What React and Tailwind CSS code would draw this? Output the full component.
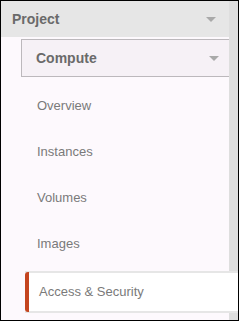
import React from 'react'

const ITEMS = ['Overview', 'Instances', 'Volumes', 'Images']

function Caret() {
  return (
    <svg width="10" height="5" viewBox="0 0 10 5" className="shrink-0">
      <path d="M0 0 L10 0 L5 5 Z" fill="#a9a9a9" />
    </svg>
  )
}

export default function App() {
  return (
    <div className="w-[240px] h-[322px] bg-white" style={{ fontFamily: '"Liberation Sans", Arial, sans-serif' }}>
      <div className="w-[239px] h-[321px] border border-black flex flex-col overflow-hidden bg-[#fdf9fd]">
        {/* Project header */}
        <div className="flex h-[36px] shrink-0">
          <div className="w-[228px] bg-[#e6e6e6] flex items-center justify-between pl-[11px] pr-[13px]">
            <span className="text-[14px] font-bold text-[#6a6a6a]">Project</span>
            <Caret />
          </div>
          <div className="flex-1 bg-[#dedede]" />
        </div>

        {/* Compute + items */}
        <div className="flex flex-1">
          <div className="w-[228px] flex flex-col">
            <div className="mt-[2px] ml-[20px] h-[38px] border border-r-0 border-[#bcb8bc] bg-[#f6f1f6] flex items-center justify-between pl-[14px] pr-[10px]">
              <span className="text-[14px] font-bold text-[#6a6a6a]">Compute</span>
              <Caret />
            </div>
            <div className="mt-[6px] flex flex-col">
              {ITEMS.map((it) => (
                <div key={it} className="h-[46px] flex items-center pl-[36px] text-[13px] text-[#7a7a7a]">
                  {it}
                </div>
              ))}
            </div>
          </div>
          <div className="flex-1 bg-[#dedede]" />
        </div>

        {/* Active item */}
        <div className="flex shrink-0">
          <div className="w-[24px] bg-[#fdf9fd]" />
          <div className="flex-1 h-[42px] bg-white border-y-2 border-[#e6e6e6] flex items-center relative pl-[14px] text-[13px] text-[#7a7a7a]">
            <div className="absolute left-0 top-[-1px] bottom-[-1px] w-[4px] rounded-l-[3px] bg-[#c4451f]" />
            Access &amp; Security
          </div>
        </div>

        <div className="flex h-[7px] shrink-0">
          <div className="w-[228px]" />
          <div className="flex-1 bg-[#dedede]" />
        </div>
      </div>
    </div>
  )
}
